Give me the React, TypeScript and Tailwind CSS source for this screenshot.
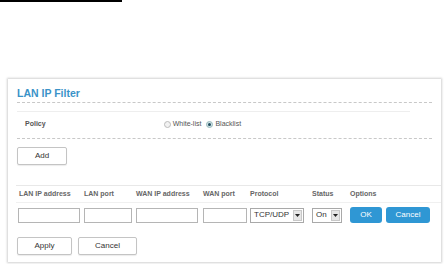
import React from "react";

function Select({ value, width }: { value: string; width: string }) {
  return (
    <div className={`flex h-[15px] ${width} items-center border border-[#a9a9a9] bg-white`}>
      <span className="flex-1 pl-[3px] text-[8px] leading-none text-[#333]">{value}</span>
      <span className="mr-[1px] flex h-[11px] w-[9px] items-center justify-center border border-[#c8c8c8] bg-[#e6e6e6]">
        <svg width="5" height="3" viewBox="0 0 5 3">
          <path d="M0 0h5L2.5 3z" fill="#222" />
        </svg>
      </span>
    </div>
  );
}

function GrayBtn({ label, width }: { label: string; width: string }) {
  return (
    <div
      className={`flex h-[18px] ${width} items-center justify-center rounded-[2px] border border-[#c4c4c4] bg-white text-[8px] text-[#333] shadow-[0_1px_1px_rgba(0,0,0,0.08)]`}
    >
      {label}
    </div>
  );
}

export default function App() {
  return (
    <div
      className="h-[264px] w-[446px] overflow-hidden bg-white"
      style={{ fontFamily: '"Liberation Sans", Arial, sans-serif' }}
    >
      <div className="h-[2px] w-[122px] bg-black" />
      <div className="ml-[8px] mt-[77px] h-[183px] w-[433px] bg-white shadow-[0_0_2px_1px_rgba(0,0,0,0.18)]">
        <div className="px-[9px]">
          <div className="h-[24px] border-b border-dashed border-[#c8c8c8] pt-[7px] text-[10.5px] font-bold leading-[14px] text-[#3a93c8]">
            LAN IP Filter
          </div>
          <div className="mt-[8px] h-px w-[393px] bg-[#eeeeee]" />
          <div className="flex h-[27px] items-center border-b border-dashed border-[#c8c8c8] pb-[2px]">
            <span className="ml-[8px] text-[7px] font-bold text-[#555]">Policy</span>
            <div className="ml-[118px] flex items-center text-[7px] text-[#555]">
              <span className="h-[7px] w-[7px] rounded-full border border-[#bbb] bg-[#f2f2f2]" />
              <span className="ml-[2px]">White-list</span>
              <span className="ml-[5px] flex h-[7px] w-[7px] items-center justify-center rounded-full border border-[#9bb] bg-[#cfe0e6]">
                <span className="h-[3px] w-[3px] rounded-full bg-[#1f4e5e]" />
              </span>
              <span className="ml-[2px]">Blacklist</span>
            </div>
          </div>
          <div className="mt-[8px]">
            <GrayBtn label="Add" width="w-[50px]" />
          </div>
        </div>
        <div className="ml-[8px] mt-[20px] h-px bg-[#e8e8e8]" />
        <div className="ml-[8px] flex h-[17px] items-center border-b border-[#f0f0f0] text-[7px] font-bold text-[#666]">
          <span className="ml-[3px] w-[65px]">LAN IP address</span>
          <span className="w-[52px]">LAN port</span>
          <span className="w-[67px]">WAN IP address</span>
          <span className="w-[47px]">WAN port</span>
          <span className="w-[62px]">Protocol</span>
          <span className="w-[38px]">Status</span>
          <span>Options</span>
        </div>
        <div className="ml-[10px] mt-[4px] flex items-center">
          <div className="h-[15px] w-[62px] border border-[#b5b5b5] bg-white" />
          <div className="ml-[4px] h-[15px] w-[48px] border border-[#b5b5b5] bg-white" />
          <div className="ml-[4px] h-[15px] w-[62px] border border-[#b5b5b5] bg-white" />
          <div className="ml-[5px] h-[15px] w-[44px] border border-[#b5b5b5] bg-white" />
          <div className="ml-[3px]">
            <Select value="TCP/UDP" width="w-[54px]" />
          </div>
          <div className="ml-[8px]">
            <Select value="On" width="w-[30px]" />
          </div>
          <div className="ml-[8px] flex h-[16px] w-[32px] items-center justify-center rounded-[3px] bg-[#2f97d4] text-[8px] text-white">
            OK
          </div>
          <div className="ml-[4px] flex h-[16px] w-[44px] items-center justify-center rounded-[3px] bg-[#2f97d4] text-[8px] text-white">
            Cancel
          </div>
        </div>
        <div className="ml-[9px] mt-[14px] flex">
          <GrayBtn label="Apply" width="w-[55px]" />
          <div className="ml-[6px]">
            <GrayBtn label="Cancel" width="w-[59px]" />
          </div>
        </div>
      </div>
    </div>
  );
}
